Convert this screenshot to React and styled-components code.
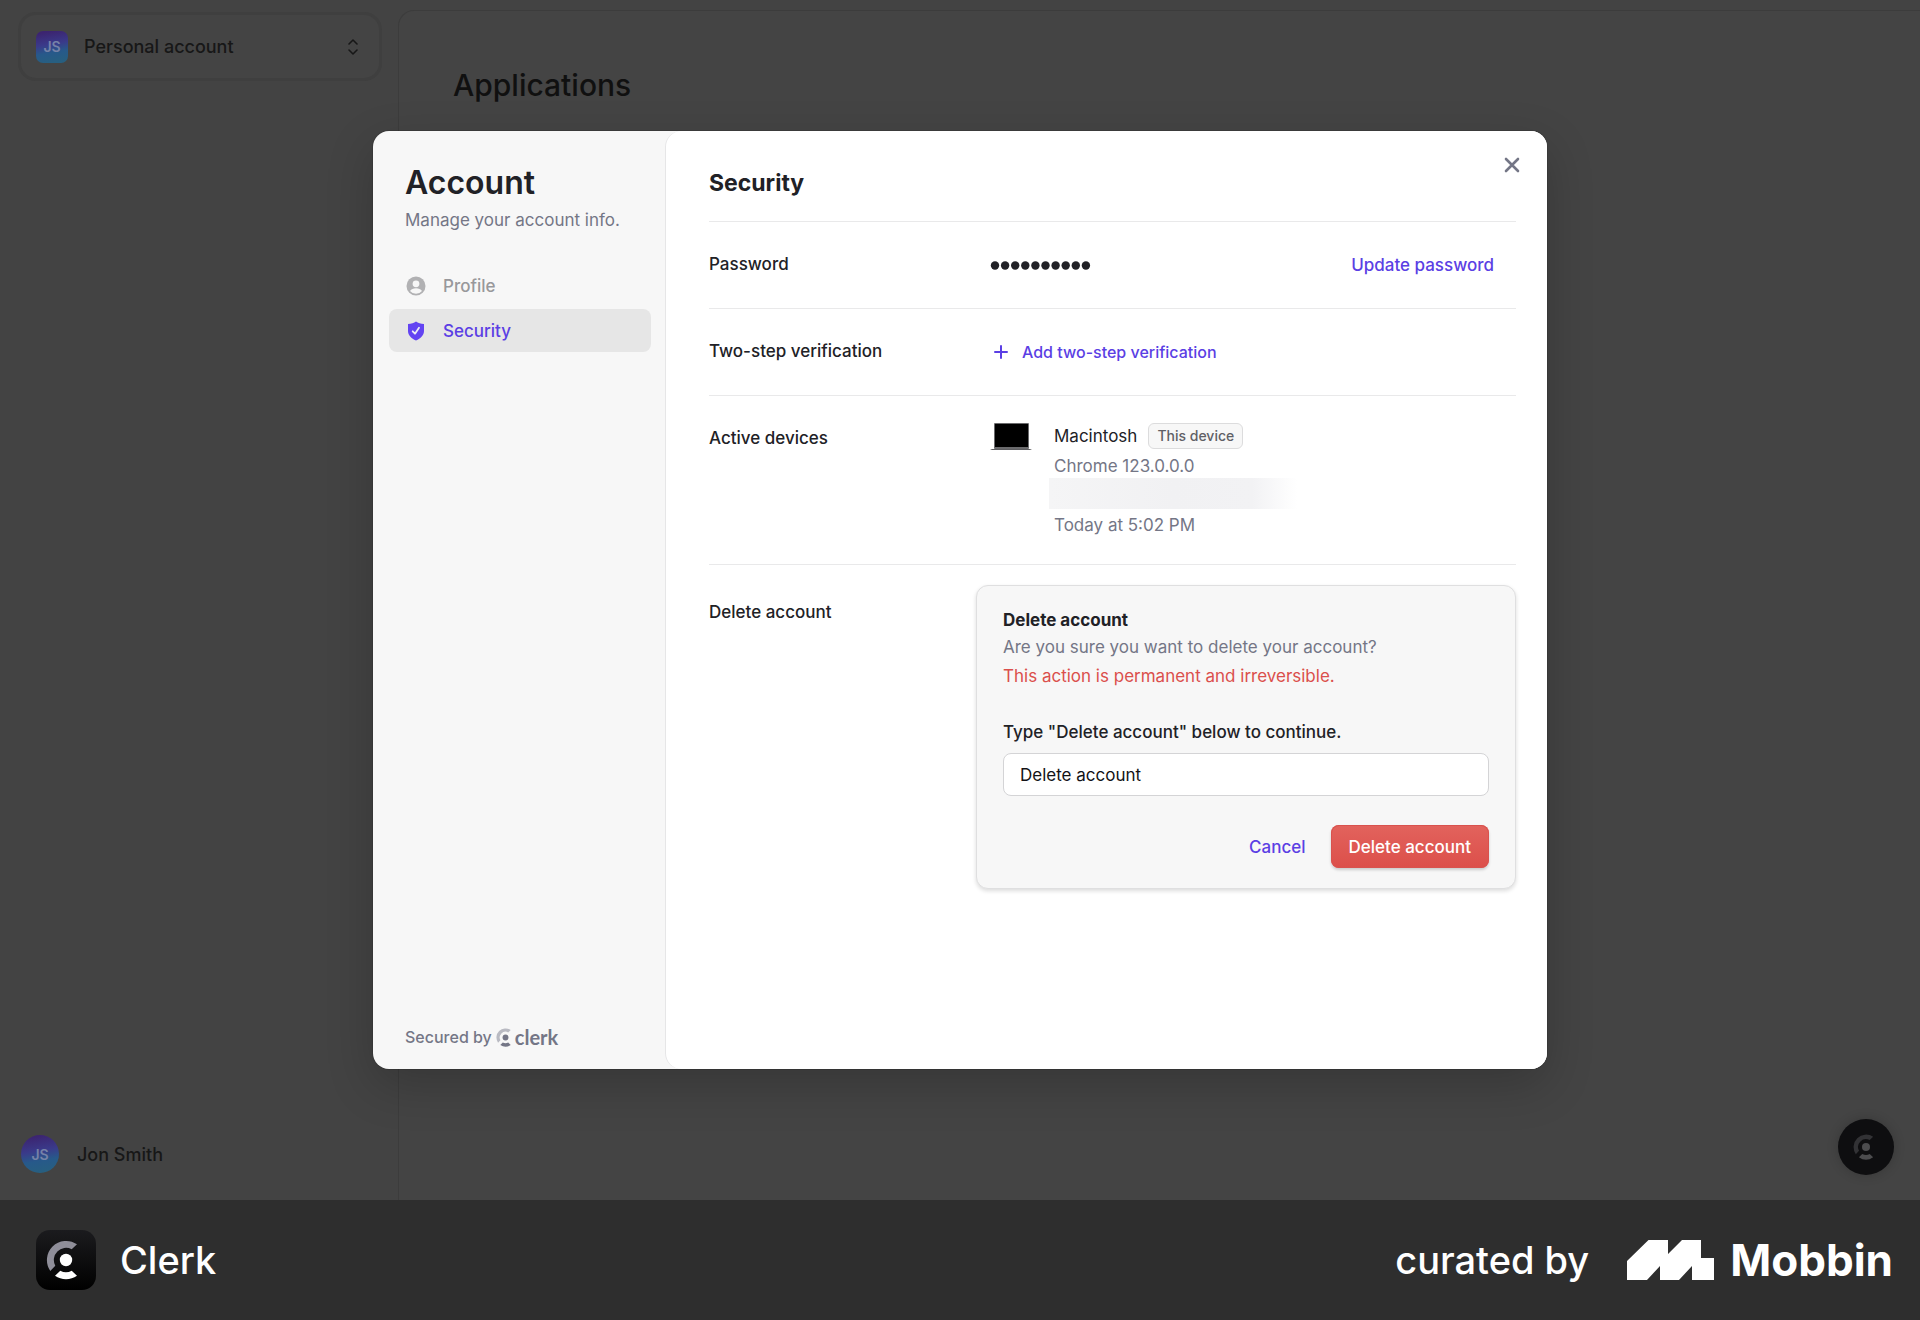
import React from "react";
import styled, { createGlobalStyle } from "styled-components";

const GlobalStyle = createGlobalStyle`
  *, *::before, *::after { box-sizing: border-box; }
  body { margin: 0; background: #2e2e2e; }
  body, button, input { font-family: Inter, "Liberation Sans", Arial, sans-serif; }
  h1, h2, h3, h4, p, ul { margin: 0; padding: 0; }
  ul { list-style: none; }
  button { border: 0; background: none; padding: 0; cursor: pointer; }
  svg { display: block; flex: none; }
`;

const Page = styled.div`
  min-height: 100vh;
  display: flex;
  flex-direction: column;
`;

const Stage = styled.div`
  flex: 1;
  position: relative;
  display: grid;
  background: #434343;
`;

const Shell = styled.div`
  grid-area: 1 / 1;
  display: grid;
  grid-template-columns: 398px 1fr;
  padding-top: 10px;
`;

const Sidebar = styled.div`
  display: flex;
  flex-direction: column;
  justify-content: space-between;
  padding: 2px 16px 27px 18px;
`;

const Switcher = styled.button`
  display: flex;
  align-items: center;
  gap: 16px;
  height: 69px;
  padding: 0 19px 0 15px;
  border: 3px solid #3f3f3f;
  border-radius: 18px;
  background: #444444;
  color: #171717;
  font-size: 18px;
  font-weight: 500;
  text-align: left;
`;

const SwitcherName = styled.span`
  flex: 1;
`;

const Avatar = styled.span`
  display: grid;
  place-items: center;
  width: ${(p) => p.$size}px;
  height: ${(p) => p.$size}px;
  border-radius: ${(p) => (p.$round ? "50%" : "7px")};
  background: linear-gradient(170deg, #3c2470 8%, #3a3a8a 42%, #27598a 65%, #275f80 92%);
  color: #7682a8;
  font-size: 14px;
  font-weight: 600;
`;

const UserButton = styled.button`
  display: flex;
  align-items: center;
  gap: 18px;
  padding: 0 3px;
  color: #171717;
  font-size: 18px;
  font-weight: 500;
`;

const Panel = styled.main`
  border: 1px solid #3c3c3c;
  border-width: 1px 0 0 1px;
  border-top-left-radius: 16px;
  background: #444444;
  padding: 52px 54px;
`;

const PageTitle = styled.h1`
  font-size: 30px;
  line-height: 44px;
  font-weight: 500;
  color: #101010;
`;

const Fab = styled.button`
  position: absolute;
  right: 26px;
  bottom: 25px;
  width: 56px;
  height: 56px;
  display: grid;
  place-items: center;
  border-radius: 50%;
  background: #0e0e10;
  box-shadow: 0 0 12px rgba(0, 0, 0, 0.2);
`;

const ModalArea = styled.div`
  grid-area: 1 / 1;
  position: relative;
  display: grid;
  justify-content: center;
  grid-template-columns: minmax(0, 1174px);
  padding: 131px 32px;
`;

const Modal = styled.div`
  display: grid;
  grid-template-columns: 292px 1fr;
  border-radius: 16px;
  overflow: hidden;
  background: #f7f7f7;
  color: #212126;
  box-shadow: 0 16px 48px rgba(0, 0, 0, 0.2), 0 0 0 1px rgba(0, 0, 0, 0.1);
`;

const ModalNav = styled.nav`
  display: flex;
  flex-direction: column;
  padding: 32px 14px 20px 16px;
`;

const NavTitle = styled.h2`
  padding: 0 16px;
  font-size: 32px;
  line-height: 40px;
  font-weight: 600;
`;

const NavSubtitle = styled.p`
  padding: 0 16px;
  font-size: 17px;
  line-height: 34px;
  color: #747686;
`;

const NavList = styled.ul`
  display: grid;
  gap: 2px;
  padding-top: 27px;
`;

const NavItem = styled.button`
  display: flex;
  align-items: center;
  gap: 16px;
  width: 100%;
  height: 43px;
  padding: 0 16px;
  border-radius: 8px;
  font-size: 17px;
  font-weight: 500;
  color: ${(p) => (p.$active ? "#5b3fe4" : "#98989b")};
  background: ${(p) => (p.$active ? "#e6e6e6" : "transparent")};
`;

const Secured = styled.p`
  display: flex;
  align-items: center;
  gap: 4px;
  margin-top: auto;
  padding: 0 16px;
  font-size: 16px;
  line-height: 24px;
  font-weight: 500;
  color: #747686;
`;

const ClerkWord = styled.span`
  display: flex;
  align-items: center;
  font-family: Lato, Inter, sans-serif;
  font-size: 20px;
  font-weight: 700;
`;

const ModalBody = styled.section`
  position: relative;
  padding: 34px 31px 32px 43px;
  border-left: 1px solid #e6e6e7;
  border-radius: 16px 0 0 16px;
  background: #ffffff;
`;

const BodyTitle = styled.h3`
  padding-bottom: 20px;
  font-size: 23px;
  line-height: 36px;
  font-weight: 700;
`;

const CloseButton = styled.button`
  position: absolute;
  top: 23px;
  right: 24px;
  color: #747686;
`;

const Row = styled.section`
  display: grid;
  grid-template-columns: 267px minmax(0, 1fr);
  border-top: 1px solid #e9e9ea;
  padding: ${(p) => (p.$card ? "20px 0" : "22px 0")};
`;

const RowLabel = styled.h4`
  padding-top: ${(p) => (p.$card ? "7px" : "0")};
  font-size: 17px;
  line-height: 40px;
  font-weight: 500;
`;

const RowValue = styled.div`
  display: flex;
  align-items: center;
  justify-content: space-between;
  padding: 0 22px 0 14px;
  min-height: 42px;
`;

const LinkButton = styled.button`
  display: flex;
  align-items: center;
  gap: 10px;
  font-size: ${(p) => (p.$small ? "16px" : "17px")};
  line-height: 42px;
  font-weight: 500;
  color: #5b3fe4;
`;

const Device = styled.div`
  display: flex;
  gap: 22px;
  padding: 3px 0 1px 14px;
`;

const DeviceInfo = styled.div`
  font-size: 17px;
  color: #747686;
`;

const DeviceName = styled.p`
  display: flex;
  align-items: center;
  gap: 11px;
  padding-bottom: 3px;
  line-height: 30px;
  color: #212126;
`;

const Badge = styled.span`
  padding: 0 8px;
  border: 1px solid #dcdcdd;
  border-radius: 6px;
  background: #f7f7f7;
  font-size: 14px;
  line-height: 24px;
  font-weight: 500;
  color: #5f5f66;
`;

const DeviceLine = styled.p`
  line-height: ${(p) => (p.$last ? "32px" : "24px")};
`;

const Redacted = styled.div`
  width: 248px;
  height: 31px;
  margin-left: -5px;
  background: linear-gradient(90deg, #f5f5f6, #f1f1f3 50%, #f2f2f4 82%, #ffffff);
`;

const ConfirmCard = styled.form`
  display: flex;
  flex-direction: column;
  padding: 20px 26px;
  border: 1px solid #dfdfe0;
  border-radius: 12px;
  background: #f7f7f7;
  box-shadow: 0 2px 4px rgba(0, 0, 0, 0.14);
`;

const CardTitle = styled.h4`
  font-size: 17px;
  line-height: 28px;
  font-weight: 700;
`;

const CardText = styled.p`
  font-size: 17px;
  line-height: ${(p) => (p.$danger ? "32px" : "26px")};
  color: ${(p) => (p.$danger ? "#db4f4c" : "#747686")};
`;

const CardLabel = styled.label`
  padding-top: 26px;
  font-size: 17px;
  line-height: 28px;
  font-weight: 500;
`;

const TextInput = styled.input`
  height: 43px;
  margin-top: 7px;
  padding: 0 16px;
  border: 1px solid #d4d4d6;
  border-radius: 8px;
  background: #ffffff;
  color: #131316;
  font-size: 17px;
`;

const Actions = styled.div`
  display: flex;
  justify-content: flex-end;
  align-items: center;
  gap: 25px;
  padding-top: 29px;
`;

const DangerButton = styled.button`
  height: 43px;
  padding: 0 18px;
  border-radius: 8px;
  background: linear-gradient(#e2635d, #dc4f4a);
  color: #ffffff;
  font-size: 17px;
  font-weight: 500;
  box-shadow: 0 0 0 1px #d9524e inset, 0 2px 3px rgba(0, 0, 0, 0.18);
`;

const Footer = styled.footer`
  display: flex;
  align-items: center;
  justify-content: space-between;
  height: 120px;
  padding: 0 27px 0 36px;
  background: #2e2e2e;
  color: #ffffff;
`;

const Brand = styled.div`
  display: flex;
  align-items: center;
  gap: 24px;
  font-size: 38px;
  font-weight: 500;
`;

const BrandTile = styled.span`
  display: grid;
  place-items: center;
  width: 60px;
  height: 60px;
  border-radius: 14px;
  background: linear-gradient(#1b1b1e, #000000);
`;

const Curated = styled.div`
  display: flex;
  align-items: center;
  gap: 38px;
  font-size: 38px;
  font-weight: 500;
`;

const Mobbin = styled.span`
  display: flex;
  align-items: center;
  gap: 16px;
  font-size: 44px;
  font-weight: 700;
`;

function ClerkMark({ size, arc, body }) {
  return (
    <svg width={size} height={size} viewBox="0 0 40 40" aria-hidden="true">
      <path d="M31 4.300 25.700 9.300A12.100 12.100 0 0 0 9.300 25.700L4.300 31A19.200 19.200 0 0 1 31 4.300Z" fill={arc} />
      <circle cx="20" cy="20" r="6.200" fill={body} />
      <path d="M31 35.700 25.700 30.700A12.100 12.100 0 0 1 14.300 30.700L9 35.700A19.200 19.200 0 0 0 31 35.700Z" fill={body} />
    </svg>
  );
}

const Chevrons = () => (
  <svg width="14" height="20" viewBox="0 0 14 20" fill="none" stroke="#171717" strokeWidth="1.6" strokeLinecap="round" strokeLinejoin="round" aria-hidden="true">
    <path d="M3 7 7 3 11 7M3 13 7 17 11 13" />
  </svg>
);

const ProfileIcon = () => (
  <svg width="22" height="22" viewBox="0 0 22 22" aria-hidden="true">
    <circle cx="11" cy="11" r="9.500" fill="#b1b1b3" />
    <circle cx="11" cy="8.800" r="3.400" fill="#f7f7f7" />
    <path d="M5 15.900c1.200-1.800 3.400-2.700 6-2.700s4.800.9 6 2.700a7.800 7.800 0 0 1-12 0Z" fill="#f7f7f7" />
  </svg>
);

const ShieldIcon = () => (
  <svg width="22" height="22" viewBox="0 0 22 22" aria-hidden="true">
    <path d="M11 1.500c2 1.600 4.700 2.500 8 2.500v7c0 4.300-3.300 7.500-8 9.500-4.700-2-8-5.200-8-9.500V4c3.300 0 6-.9 8-2.500Z" fill="#6344f2" />
    <path d="m7.700 11.300 2.300 2.400 4-6" fill="none" stroke="#ececf4" strokeWidth="1.800" strokeLinecap="round" strokeLinejoin="round" />
  </svg>
);

const PlusIcon = () => (
  <svg width="22" height="22" viewBox="0 0 22 22" stroke="#5b3fe4" strokeWidth="2" strokeLinecap="round" aria-hidden="true">
    <path d="M11 5v12M5 11h12" />
  </svg>
);

const CloseIcon = () => (
  <svg width="22" height="22" viewBox="0 0 22 22" stroke="currentColor" strokeWidth="2.600" strokeLinecap="round" aria-hidden="true">
    <path d="m5 5 12 12M17 5 5 17" />
  </svg>
);

const LaptopIcon = () => (
  <svg width="42" height="30" viewBox="0 0 42 30" aria-hidden="true">
    <rect x="4" y="2" width="35" height="26" rx="1" fill="#6a6a6c" />
    <rect x="5" y="3" width="33" height="23" fill="#000" />
    <path d="M0 28h42l-2 1H2Z" fill="#5f5f62" />
  </svg>
);

const Dots = () => (
  <svg width="102" height="10" viewBox="0 0 102 10" role="img" aria-label="Password hidden" fill="#212126">
    {Array.from({ length: 10 }, (_, i) => (
      <circle key={i} cx={5 + i * 10.1} cy="5.500" r="4.200" />
    ))}
  </svg>
);

const MobbinMark = () => (
  <svg width="87" height="40" viewBox="0 0 87 40" fill="#fff" aria-hidden="true">
    <path d="M0 21 21.500 0H41v14L55 0h19v18h13v22H65V26L52 40H33V26L20 40H0Z" />
  </svg>
);

export default function App() {
  return (
    <Page>
      <GlobalStyle />
      <Stage>
        <Shell>
          <Sidebar>
            <Switcher type="button">
              <Avatar $size={32}>JS</Avatar>
              <SwitcherName>Personal account</SwitcherName>
              <Chevrons />
            </Switcher>
            <UserButton type="button">
              <Avatar $size={38} $round>JS</Avatar>
              Jon Smith
            </UserButton>
          </Sidebar>
          <Panel>
            <PageTitle>Applications</PageTitle>
          </Panel>
        </Shell>
        <ModalArea>
          <Modal role="dialog" aria-modal="true" aria-label="Account">
            <ModalNav>
              <NavTitle>Account</NavTitle>
              <NavSubtitle>Manage your account info.</NavSubtitle>
              <NavList>
                <li><NavItem type="button"><ProfileIcon />Profile</NavItem></li>
                <li><NavItem type="button" $active aria-current="page"><ShieldIcon />Security</NavItem></li>
              </NavList>
              <Secured>
                Secured by
                <ClerkWord><ClerkMark size={19} arc="#b9bac2" body="#747686" />clerk</ClerkWord>
              </Secured>
            </ModalNav>
            <ModalBody>
              <CloseButton type="button" aria-label="Close"><CloseIcon /></CloseButton>
              <BodyTitle>Security</BodyTitle>
              <Row>
                <RowLabel>Password</RowLabel>
                <RowValue>
                  <Dots />
                  <LinkButton type="button">Update password</LinkButton>
                </RowValue>
              </Row>
              <Row>
                <RowLabel>Two-step verification</RowLabel>
                <RowValue>
                  <LinkButton type="button" $small><PlusIcon />Add two-step verification</LinkButton>
                </RowValue>
              </Row>
              <Row>
                <RowLabel>Active devices</RowLabel>
                <Device>
                  <LaptopIcon />
                  <DeviceInfo>
                    <DeviceName>Macintosh <Badge>This device</Badge></DeviceName>
                    <DeviceLine>Chrome 123.0.0.0</DeviceLine>
                    <Redacted />
                    <DeviceLine $last>Today at 5:02 PM</DeviceLine>
                  </DeviceInfo>
                </Device>
              </Row>
              <Row $card>
                <RowLabel $card>Delete account</RowLabel>
                <ConfirmCard onSubmit={(e) => e.preventDefault()}>
                  <CardTitle>Delete account</CardTitle>
                  <CardText>Are you sure you want to delete your account?</CardText>
                  <CardText $danger>This action is permanent and irreversible.</CardText>
                  <CardLabel htmlFor="confirm">Type "Delete account" below to continue.</CardLabel>
                  <TextInput id="confirm" type="text" defaultValue="Delete account" />
                  <Actions>
                    <LinkButton type="button">Cancel</LinkButton>
                    <DangerButton type="submit">Delete account</DangerButton>
                  </Actions>
                </ConfirmCard>
              </Row>
            </ModalBody>
          </Modal>
        </ModalArea>
        <Fab type="button" aria-label="Open Clerk menu"><ClerkMark size={26} arc="#323235" body="#4c4c4e" /></Fab>
      </Stage>
      <Footer>
        <Brand>
          <BrandTile><ClerkMark size={40} arc="#8f8e99" body="#ffffff" /></BrandTile>
          Clerk
        </Brand>
        <Curated>
          curated by
          <Mobbin><MobbinMark />Mobbin</Mobbin>
        </Curated>
      </Footer>
    </Page>
  );
}
